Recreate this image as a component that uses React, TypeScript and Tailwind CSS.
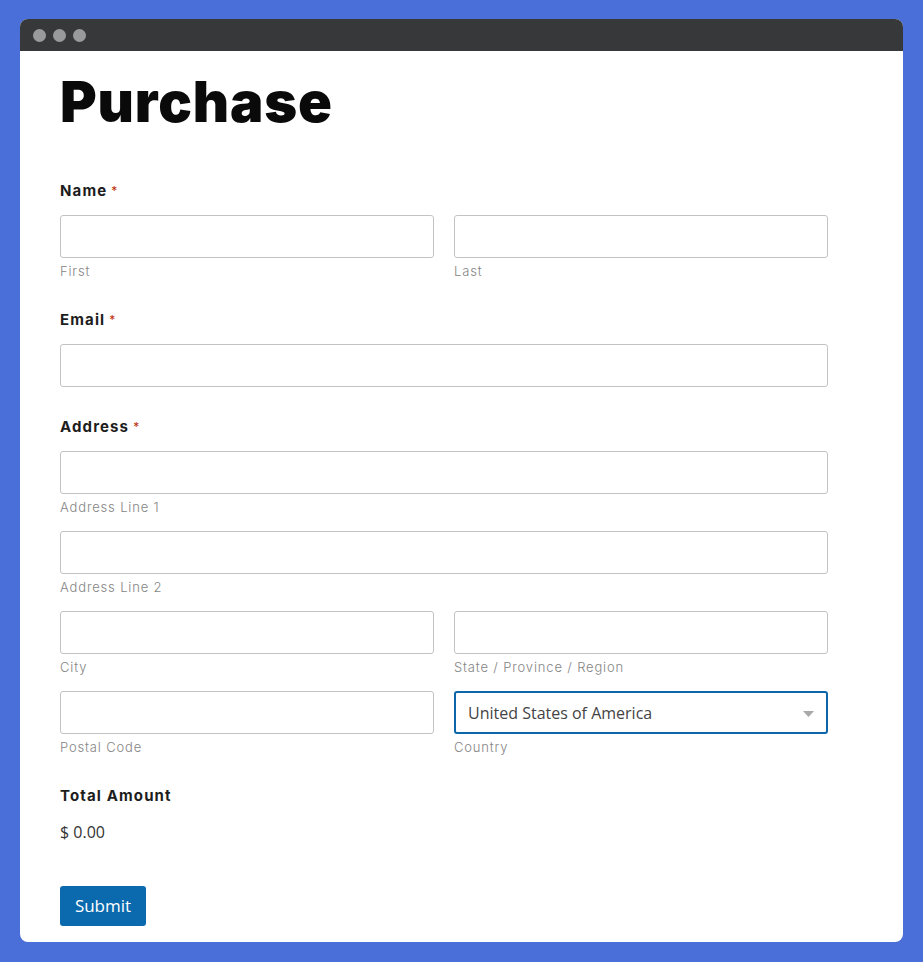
import React from "react"

const labelFont = { fontFamily: "Inter, 'Noto Sans', sans-serif" }

function FieldLabel({ text, required }: { text: string; required?: boolean }) {
  return (
    <div className="h-5 text-[15px] leading-5 font-bold text-[#1d1d1d] tracking-[0.075em] pt-px">
      {text}
      {required && <span className="ml-1 text-[12px] align-top text-[#c02b0a] font-normal">*</span>}
    </div>
  )
}

function TextInput() {
  return <input type="text" className="block w-full h-[43px] border border-[#c3c3c3] rounded-[3px] bg-white px-3 outline-none" />
}

function SubLabel({ text }: { text: string }) {
  return <div className="mt-1 h-[18px] text-[13px] leading-[18px] font-light text-[#858585] tracking-[0.065em]">{text}</div>
}

function Sub({ label, children }: { label: string; children?: React.ReactNode }) {
  return (
    <div className="flex-1">
      {children ?? <TextInput />}
      <SubLabel text={label} />
    </div>
  )
}

export default function App() {
  return (
    <div className="min-h-[962px] bg-[#4a6fd8] pt-[19px] pl-[20px] pr-[20px] pb-[20px]" style={labelFont}>
      <div className="w-[883px] h-[923px] rounded-[8px] overflow-hidden bg-white">
        <div className="h-8 bg-[#37383a] flex items-center gap-[7px] pl-[13px]">
          <span className="w-[13px] h-[13px] rounded-full bg-[#999a9c]" />
          <span className="w-[13px] h-[13px] rounded-full bg-[#999a9c]" />
          <span className="w-[13px] h-[13px] rounded-full bg-[#999a9c]" />
        </div>
        <div className="pl-10 pt-[23px] w-[808px]">
          <h1 className="text-[56px] leading-[56px] font-black text-[#0a0a0a] tracking-[0.015em]">Purchase</h1>

          <div className="mt-[50px]">
            <FieldLabel text="Name" required />
            <div className="mt-[15px] flex gap-5">
              <Sub label="First" />
              <Sub label="Last" />
            </div>
          </div>

          <div className="mt-[29px]">
            <FieldLabel text="Email" required />
            <div className="mt-[15px]">
              <TextInput />
            </div>
          </div>

          <div className="mt-[29px]">
            <FieldLabel text="Address" required />
            <div className="mt-[15px] flex flex-col gap-[15px]">
              <Sub label="Address Line 1" />
              <Sub label="Address Line 2" />
              <div className="flex gap-5">
                <Sub label="City" />
                <Sub label="State / Province / Region" />
              </div>
              <div className="flex gap-5">
                <Sub label="Postal Code" />
                <Sub label="Country">
                  <div className="relative h-[43px] border-2 border-[#0b67a9] rounded-[3px] flex items-center pl-3">
                    <span className="text-[16px] text-[#444]" style={{ fontFamily: "'Open Sans', sans-serif" }}>
                      United States of America
                    </span>
                    <svg className="absolute right-[12px] top-[18px]" width="11" height="6" viewBox="0 0 11 6">
                      <path d="M0 0 L11 0 L5.5 6 Z" fill="#a9a9a9" />
                    </svg>
                  </div>
                </Sub>
              </div>
            </div>
          </div>

          <div className="mt-[29px]">
            <FieldLabel text="Total Amount" />
            <div className="mt-[15px] h-6 leading-6 text-[16px] text-[#333]" style={{ fontFamily: "'Open Sans', sans-serif" }}>
              $ 0.00
            </div>
          </div>

          <button
            type="button"
            className="mt-[42px] h-10 w-[86px] rounded-[3px] bg-[#0b6aad] text-white text-[17px]"
            style={{ fontFamily: "'Open Sans', sans-serif" }}
          >
            Submit
          </button>
        </div>
      </div>
    </div>
  )
}
